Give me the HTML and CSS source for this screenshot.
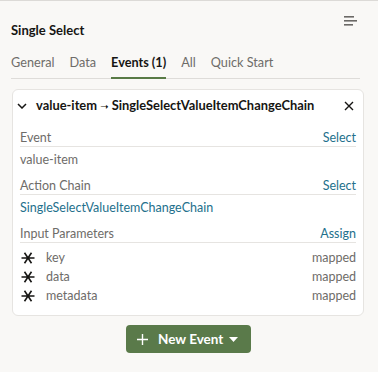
FILE: index.html
```html
<!DOCTYPE html>
<html>
<head>
<meta charset="utf-8">
<link rel="stylesheet" href="styles.css">
</head>
<body>
<div class="panel">
  <div class="top">
    <div class="title">Single Select</div>
    <svg class="menu" width="14" height="12" viewBox="0 0 14 12"><rect x="0" y="0" width="10" height="1.6" fill="#6b6966"/><rect x="0" y="4" width="13" height="1.6" fill="#6b6966"/><rect x="0" y="8" width="9" height="1.6" fill="#6b6966"/></svg>
  </div>
  <div class="tabs">
    <div class="tab">General</div>
    <div class="tab">Data</div>
    <div class="tab active">Events (1)</div>
    <div class="tab">All</div>
    <div class="tab">Quick Start</div>
  </div>
  <div class="card">
    <div class="card-head">
      <svg class="chev" width="10" height="6" viewBox="0 0 10 6"><path d="M1 1 L5 5 L9 1" fill="none" stroke="#161513" stroke-width="1.5"/></svg>
      <div class="card-title">value-item <span class="arrow">➝</span> SingleSelectValueItemChangeChain</div>
      <svg class="close" width="10" height="10" viewBox="0 0 10 10"><path d="M1 1 L9 9 M9 1 L1 9" stroke="#161513" stroke-width="1.4"/></svg>
    </div>
    <div class="section">
      <div class="label-row"><span>Event</span><span class="link">Select</span></div>
      <div class="value">value-item</div>
    </div>
    <div class="section">
      <div class="label-row"><span>Action Chain</span><span class="link">Select</span></div>
      <div class="value link">SingleSelectValueItemChangeChain</div>
    </div>
    <div class="section">
      <div class="label-row"><span>Input Parameters</span><span class="link">Assign</span></div>
      <div class="params">
        <div class="param"><svg class="ast" width="14" height="12" viewBox="0 0 14 12"><path d="M0.5 6 H13.5 M3.5 0.8 L10.5 11.2 M10.5 0.8 L3.5 11.2" stroke="#161513" stroke-width="1.6"/></svg><span class="pname">key</span><span class="pval">mapped</span></div>
        <div class="param"><svg class="ast" width="14" height="12" viewBox="0 0 14 12"><path d="M0.5 6 H13.5 M3.5 0.8 L10.5 11.2 M10.5 0.8 L3.5 11.2" stroke="#161513" stroke-width="1.6"/></svg><span class="pname">data</span><span class="pval">mapped</span></div>
        <div class="param"><svg class="ast" width="14" height="12" viewBox="0 0 14 12"><path d="M0.5 6 H13.5 M3.5 0.8 L10.5 11.2 M10.5 0.8 L3.5 11.2" stroke="#161513" stroke-width="1.6"/></svg><span class="pname">metadata</span><span class="pval">mapped</span></div>
      </div>
    </div>
  </div>
  <div class="actions">
    <button class="btn">
      <svg width="11" height="11" viewBox="0 0 11 11"><path d="M5.5 0 V11 M0 5.5 H11" stroke="#fff" stroke-width="1.4"/></svg>
      <span class="btn-text">New Event</span>
      <svg class="caret" width="9" height="5" viewBox="0 0 9 5"><path d="M0 0 H9 L4.5 5 Z" fill="#fff"/></svg>
    </button>
  </div>
</div>
</body>
</html>
```
FILE: styles.css
```css
* { box-sizing: border-box; }
html, body { margin: 0; padding: 0; }
body {
  background: #f9f8f6;
  border-top: 1px solid #dcdad7;
  font-family: "Lato", "Noto Sans", sans-serif;
  color: #161513;
  width: 378px;
  height: 372px;
  overflow: hidden;
}
.panel { padding: 0 18px 0 11px; }
.top {
  display: flex;
  justify-content: space-between;
  align-items: flex-start;
  padding-top: 15px;
  height: 45px;
}
.title {
  font-size: 13px;
  font-weight: 700;
  line-height: 18px;
  margin-top: 5px;
}
.menu { margin-right: 2px; }
.tabs {
  display: flex;
  gap: 15px;
  border-bottom: 1px solid #dedcd9;
  height: 33px;
}
.tab {
  font-size: 12.7px;
  line-height: 18px;
  color: #6e6c69;
  padding-top: 7px;
  border-bottom: 2px solid transparent;
  margin-bottom: -1px;
}
.tab.active {
  color: #161513;
  font-weight: 700;
  border-bottom-color: #587a45;
}
.card {
  margin: 10px -4px 0 1px;
  background: #fff;
  border: 1px solid #e6e4e1;
  border-radius: 6px;
  padding: 0 7px 10px 7px;
}
.card-head {
  display: flex;
  align-items: center;
  height: 32px;
  margin-bottom: 8px;
}
.chev { margin-left: -3px; margin-right: 9px; }
.card-title {
  flex: 1;
  font-size: 12.9px;
  font-weight: 700;
  line-height: 18px;
  white-space: nowrap;
}
.arrow { font-size: 10px; font-family: "DejaVu Sans", sans-serif; }
.close { margin-right: 2px; }
.section + .section { margin-top: 5px; }
.label-row {
  display: flex;
  justify-content: space-between;
  font-size: 12.5px;
  line-height: 16px;
  color: #6e6c69;
  border-bottom: 1px solid #e6e4e1;
}
.link { color: #23708c; }
.value {
  font-size: 12.5px;
  line-height: 16px;
  color: #6e6c69;
  padding: 5px 0;
}
.value.link { color: #23708c; }
.params { padding-top: 5px; }
.param {
  display: flex;
  align-items: center;
  height: 19px;
  font-size: 12.5px;
  color: #6e6c69;
}
.ast { margin-left: 1px; margin-right: 11px; }
.pname { flex: 1; }
.actions {
  display: flex;
  justify-content: center;
  padding-top: 9px;
  padding-left: 6px;
}
.btn {
  display: flex;
  align-items: center;
  height: 28px;
  width: 125px;
  padding: 0 13px 0 11px;
  background: #5a7a4a;
  border: none;
  border-radius: 4px;
  color: #fff;
  font-family: "Lato", "Noto Sans", sans-serif;
  font-size: 13.5px;
  font-weight: 700;
  white-space: nowrap;
}
.btn-text { margin-left: 10px; }
.caret { margin-left: auto; }
```
